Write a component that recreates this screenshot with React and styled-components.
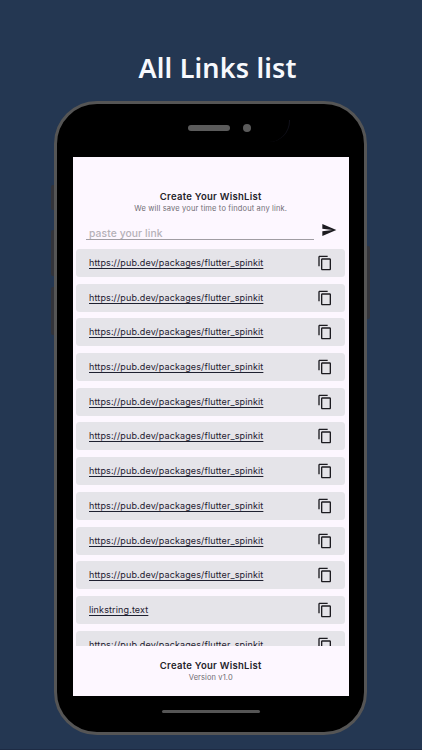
import React from "react";
import styled, { createGlobalStyle } from "styled-components";

const Global = createGlobalStyle`
  * { box-sizing: border-box; }
  body { margin: 0; background: #243752; font-family: Inter, "Liberation Sans", sans-serif; }
`;

const Page = styled.main`
  width: 422px;
  height: 750px;
  overflow: hidden;
  display: flex;
  flex-direction: column;
  align-items: flex-start;
  background: #243752;
  border-bottom: 1px solid #1d2b44;
`;

const Title = styled.h1`
  margin: 50px 0 0 138.5px;
  height: 51px;
  font: 600 27px/36px "Noto Sans", sans-serif;
  letter-spacing: 0.17px;
  color: #f7f9fd;
  white-space: nowrap;
`;

const Phone = styled.section`
  position: relative;
  width: 313px;
  height: 634px;
  flex: none;
  margin-left: 54px;
  padding: 53px 15.5px 0 16px;
  border: 3px solid #555;
  border-radius: 43px;
  background: #000;
`;

const SideButton = styled.span`
  position: absolute;
  ${(p) => (p.$right ? "right: -6px" : "left: -6px")};
  top: ${(p) => p.$top}px;
  width: 3px;
  height: ${(p) => p.$height}px;
  border-radius: ${(p) => (p.$right ? "0 2px 2px 0" : "2px 0 0 2px")};
  background: #33343a;
`;

const Speaker = styled.span`
  position: absolute;
  left: 130.5px;
  top: 21px;
  width: 42.5px;
  height: 5.5px;
  border-radius: 3px;
  background: #5b5b5b;
`;

const Camera = styled.span`
  position: absolute;
  left: 186px;
  top: 19.5px;
  width: 8px;
  height: 8px;
  border-radius: 50%;
  background: #5b5b5b;
`;

const Glint = styled.span`
  position: absolute;
  left: 212px;
  top: 16px;
  width: 21px;
  height: 22px;
  border-right: 1px solid #10101a;
  border-bottom-right-radius: 21px;
`;

const HomeBar = styled.span`
  position: absolute;
  left: 104.5px;
  top: 605.5px;
  width: 98.5px;
  height: 3px;
  border-radius: 2px;
  background: #555;
`;

const Screen = styled.div`
  width: 275.5px;
  height: 539px;
  display: flex;
  flex-direction: column;
  background: #fdf7ff;
`;

const Header = styled.header`
  height: 57.5px;
  padding-top: 32px;
  text-align: center;
`;

const Heading = styled.h2`
  margin: 0;
  padding-top: 1px;
  font-size: 9.5px;
  line-height: 13px;
  font-weight: 600;
  letter-spacing: 0.28px;
  color: #242229;
`;

const Caption = styled.p`
  margin: 0;
  font-size: 7.5px;
  line-height: 11px;
  letter-spacing: ${(p) => p.$spacing}px;
  color: #706d74;
`;

const Form = styled.form`
  height: 34.5px;
  display: flex;
  padding: 7px 12px 0 12.5px;
`;

const Field = styled.input`
  width: 228.5px;
  height: 18.5px;
  padding: 5.5px 0 0 3.5px;
  border: 0;
  border-bottom: 1px solid #a09da3;
  outline: 0;
  background: transparent;
  font: 500 10.3px/12px Inter, sans-serif;
  letter-spacing: 0.1px;
  &::placeholder { color: #b5b1b8; opacity: 1; }
`;

const IconButton = styled.button`
  display: flex;
  flex: none;
  margin: ${(p) => p.$margin || "0"};
  padding: 0;
  border: 0;
  background: none;
  color: #1c1b20;
`;

const List = styled.ul`
  flex: none;
  height: 396.5px;
  margin: 0;
  padding: 0 3.5px 0 3px;
  overflow: hidden;
  list-style: none;
  display: flex;
  flex-direction: column;
  gap: 6.7px;
`;

const Row = styled.li`
  flex: none;
  height: 28px;
  display: flex;
  align-items: center;
  justify-content: space-between;
  padding: 0 12px 0 13px;
  border-radius: 3.5px;
  background: #e5e4e9;
`;

const Link = styled.a`
  font-size: 9px;
  line-height: 14px;
  letter-spacing: 0.13px;
  color: #1e2030;
  text-decoration: underline;
  text-decoration-thickness: 1px;
  text-underline-offset: 1.5px;
  text-decoration-skip-ink: none;
`;

const Footer = styled.footer`
  padding-top: 12.5px;
  text-align: center;
`;

const Send = () => (
  <svg width="16" height="16" viewBox="0 0 24 24" fill="currentColor">
    <path d="M2.01 21 23 12 2.01 3 2 10l15 2-15 2z" />
  </svg>
);

const Copy = () => (
  <svg width="16" height="16" viewBox="0 0 24 24" fill="currentColor">
    <path d="M16 1H4c-1.1 0-2 .9-2 2v14h2V3h12V1zm3 4H8c-1.1 0-2 .9-2 2v14c0 1.1.9 2 2 2h11c1.1 0 2-.9 2-2V7c0-1.1-.9-2-2-2zm0 16H8V7h11v14z" />
  </svg>
);

const url = "https://pub.dev/packages/flutter_spinkit";
const links = [...Array(10).fill(url), "linkstring.text", url];

export default function App() {
  return (
    <>
      <Global />
      <Page>
        <Title>All Links list</Title>
        <Phone>
          <SideButton $top={81} $height={25} />
          <SideButton $top={126} $height={46} />
          <SideButton $top={183} $height={48} />
          <SideButton $right $top={142} $height={73} />
          <Speaker />
          <Camera />
          <Glint />
          <Screen>
            <Header>
              <Heading>Create Your WishList</Heading>
              <Caption $spacing={0.15}>We will save your time to findout any link.</Caption>
            </Header>
            <Form onSubmit={(e) => e.preventDefault()}>
              <Field placeholder="paste your link" />
              <IconButton aria-label="Send" $margin="0 0 0 6.5px"><Send /></IconButton>
            </Form>
            <List>
              {links.map((link, i) => (
                <Row key={i}>
                  <Link>{link}</Link>
                  <IconButton type="button" aria-label="Copy"><Copy /></IconButton>
                </Row>
              ))}
            </List>
            <Footer>
              <Heading>Create Your WishList</Heading>
              <Caption $spacing={0.1}>Version v1.0</Caption>
            </Footer>
          </Screen>
          <HomeBar />
        </Phone>
      </Page>
    </>
  );
}
